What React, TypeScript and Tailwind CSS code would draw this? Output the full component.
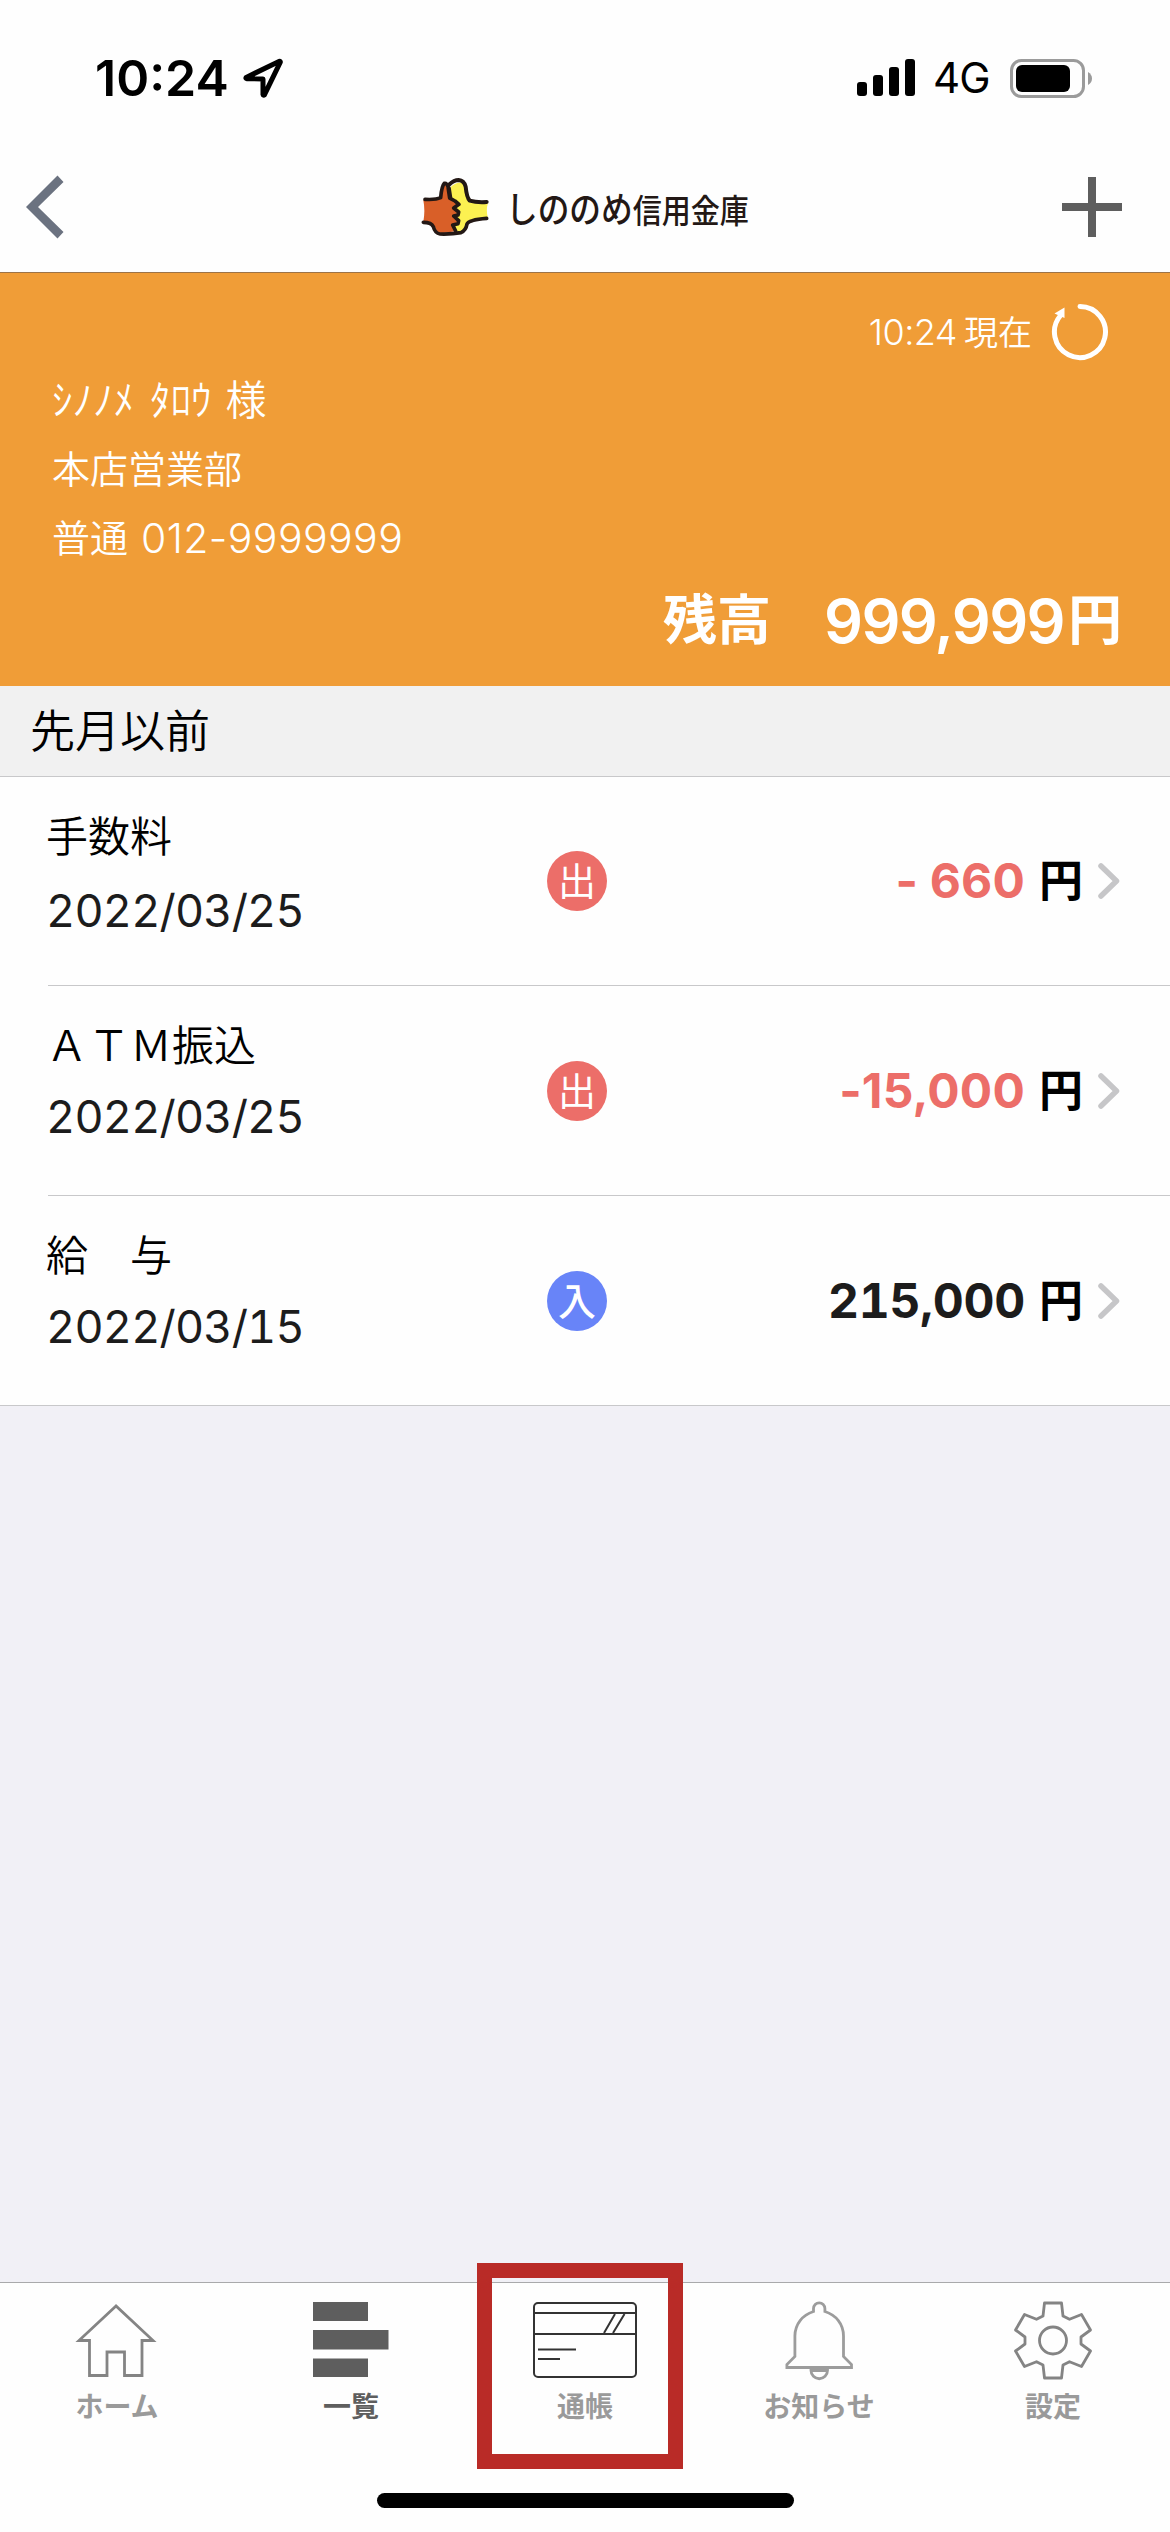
import { ReactNode } from "react";
import clsx from "clsx";

type Transaction = {
  title: string;
  date: string;
  kind: "出" | "入";
  amount: string;
};

const transactions: Transaction[] = [
  { title: "手数料", date: "2022/03/25", kind: "出", amount: "- 660" },
  { title: "ＡＴＭ振込", date: "2022/03/25", kind: "出", amount: "-15,000" },
  { title: "給　与", date: "2022/03/15", kind: "入", amount: "215,000" },
];

function StatusBar() {
  return (
    <div className="flex h-[156px] items-center pl-[95px] pr-[77px] text-black">
      <span className="w-[148px] text-[50px] font-semibold leading-none">
        10:24
      </span>
      <svg className="h-10 w-10" viewBox="0 0 40 40" fill="none">
        <path
          d="M36.5 3.2 3.2 19.4q-.8 1.2.6 1.3L20 21v15.4q.3 1.4 1.4.4L37.3 4.2q.2-1-.8-1Z"
          stroke="#000"
          strokeWidth="5"
          strokeLinejoin="round"
        />
      </svg>
      <svg className="ml-auto h-[38px] w-[58px]" viewBox="0 0 58 38">
        <rect x="0" y="23" width="10" height="14" rx="3" />
        <rect x="16" y="16" width="10" height="21" rx="3" />
        <rect x="32" y="8" width="10" height="29" rx="3" />
        <rect x="48" y="0" width="10" height="37" rx="3" />
      </svg>
      <span className="ml-[18px] w-[77px] text-[42px] leading-none tracking-[-1px]">
        4G
      </span>
      <svg className="h-[39px] w-[83px]" viewBox="0 0 83 39">
        <rect x="1.5" y="1.5" width="72" height="36" rx="10" fill="none" stroke="#9b9b9b" strokeWidth="3" />
        <rect x="6" y="6" width="54" height="27" rx="6" />
        <path d="M78 13q4 2.500 4 6.500t-4 6.500Z" fill="#9b9b9b" />
      </svg>
    </div>
  );
}

function LogoMark() {
  return (
    <svg className="h-[70px] w-20" viewBox="0 0 240 210" fill="none">
      <path
        d="M25 85Q60 86 78 80Q82 42 90 34Q98 50 106 80L128 98L114 108L130 124L114 130L130 150L112 158L122 178L80 184Q62 180 60 165Q50 155 25 150Q31 115 25 85Z"
        fill="#d95f28"
      />
      <path
        d="M106 46Q122 30 142 32Q156 60 165 92L219 92Q212 115 219 138Q165 140 158 150Q155 175 145 182L118 176L114 158L130 150L116 132L130 122L116 108L130 98L110 80Z"
        fill="#fcf151"
      />
      <g stroke="#231815" strokeLinecap="round" strokeLinejoin="round" strokeWidth="11">
        <path d="M30 82Q62 84 77 77Q80 42 88 34Q95 32 99 44L104 78" />
        <path d="M102 38Q117 24 131 24Q147 25 152 44Q155 76 164 86Q185 92 215 90" strokeWidth="12" />
        <path d="M25 151Q49 151 55 164Q60 184 75 186Q110 187 138 182Q153 175 156 156Q162 143 215 139" />
        <path d="M102 48L107 80L120 87L132 97L116 108L131 120L129 129L116 132L131 146L129 155L113 159L122 177" />
      </g>
    </svg>
  );
}

function NavBar() {
  return (
    <div className="flex h-[117px] items-center border-b border-[#9c7347] pb-[15px] pl-[26px] pr-12">
      <svg className="h-16 w-[38px]" viewBox="0 0 38 64">
        <path d="M31.500 0.500 0 32 31.500 63.500 37.500 57 12 32 37.500 7Z" fill="#6b7280" />
      </svg>
      <div className="ml-[351px] flex items-center">
        <LogoMark />
        <div className="ml-[11px] mt-[13px] w-[245px] origin-left scale-x-[0.88] whitespace-nowrap font-medium leading-10 text-[#231815]">
          <span className="text-[36px]">しののめ</span>
          <span className="text-[33px]">信用金庫</span>
        </div>
      </div>
      <svg className="ml-auto h-[60px] w-[60px]" viewBox="0 0 60 60">
        <path d="M26 0h8v60h-8zM0 26h60v8H0z" fill="#5e5e5e" />
      </svg>
    </div>
  );
}

function AccountPanel() {
  return (
    <section className="h-[413px] bg-[#f09d37] pl-[52px] pr-12 pt-[31px] text-white">
      <div className="flex h-14 items-center justify-end pr-[13px]">
        <span className="text-[36px] font-[350] tracking-[-0.5px]">10:24</span>
        <span className="ml-[7px] text-[34px] font-[350]">現在</span>
        <svg className="ml-[19px] h-[58px] w-[58px]" viewBox="0 0 58 58" fill="none">
          <path
            d="M29 3.500A25.500 25.500 0 1 1 9.500 12.500"
            stroke="#fff"
            strokeWidth="5"
            strokeLinecap="round"
          />
          <path d="M3.500 10.500 13.500 4.500v10.500Z" fill="#fff" />
        </svg>
      </div>

      <div className="mt-[6px] text-[38px] font-[350] leading-[69px]">
        <p className="flex text-[41px]">
          <span>ｼﾉﾉﾒ</span>
          <span className="ml-4">ﾀﾛｳ</span>
          <span className="ml-[14px]">様</span>
        </p>
        <p>本店営業部</p>
        <p className="flex">
          <span>普通</span>
          <span className="ml-[13px] text-[41px] tracking-[0.4px]">012-9999999</span>
        </p>
      </div>

      <p className="mt-[18px] flex justify-end text-[54px] font-semibold leading-[60px]">
        <span>残高</span>
        <span className="ml-[53px] text-[61px] tracking-[-1.6px]">999,999</span>
        <span className="ml-1">円</span>
      </p>
    </section>
  );
}

function TransactionRow({ item }: { item: Transaction }) {
  const isOut = item.kind === "出";

  return (
    <li className="group ml-12 flex h-[210px] items-center border-b border-[#c8c8ca] pr-[50px] first:h-[209px] last:ml-0 last:pl-12">
      <div className="-ml-0.5 h-full w-[501px] pt-[25px] font-[350]">
        <p className="text-[42px] leading-[70px] text-black">{item.title}</p>
        <p className="text-[45px] font-normal leading-[71px] tabular-nums tracking-[-0.8px] text-[#1c1c1c] group-first:mt-[3px]">
          {item.date}
        </p>
      </div>
      <span
        className={clsx(
          "flex h-[60px] w-[60px] items-center justify-center rounded-full text-[38px] leading-none text-white",
          isOut ? "bg-[#ec6e69]" : "bg-[#6884f8] font-medium"
        )}
      >
        {item.kind}
      </span>
      <p className="ml-auto flex items-center font-bold leading-none">
        <span
          className={clsx(
            "text-[48px]",
            isOut
              ? "tracking-[0.2px] text-[#ec6e69]"
              : "tabular-nums tracking-[-0.3px] text-[#1c1c1c]"
          )}
        >
          {item.amount}
        </span>
        <span className="ml-[14px] text-[44px] text-black">円</span>
      </p>
      <svg className="ml-[15px] h-9 w-[22px]" viewBox="0 0 22 36" fill="none">
        <path
          d="M3 3 18.500 18 3 33"
          stroke="#c6c6c8"
          strokeWidth="5.500"
          strokeLinecap="round"
          strokeLinejoin="round"
        />
      </svg>
    </li>
  );
}

function HomeIcon() {
  return (
    <svg className="h-[78px] w-[84px]" viewBox="0 0 84 78" fill="none">
      <path
        d="M41 4 4 38.500h10.500V73.500H32V50h17.500v23.500H67V38.500h11Z"
        stroke="#848484"
        strokeWidth="2.800"
      />
    </svg>
  );
}

function ListIcon() {
  return (
    <svg className="h-[78px] w-[76px]" viewBox="0 0 76 78">
      <path d="M0 0h55v19H0zM0 28h75.500v19.500H0zM0 56.500h55V75H0z" fill="#5e5e5e" />
    </svg>
  );
}

function PassbookIcon() {
  return (
    <svg className="h-[78px] w-[104px]" viewBox="0 0 104 78" fill="none" stroke="#333" strokeWidth="2">
      <rect x="1" y="1" width="102" height="74" rx="4" />
      <path d="M1 11h102M1 32h102M5 47.500h38M5 57h22" />
      <path d="M82 12 71 31M91.500 12 80 31" />
    </svg>
  );
}

function BellIcon() {
  return (
    <svg className="h-[80px] w-[68px]" viewBox="0 0 68 80" fill="none" stroke="#9c9c9c" strokeWidth="2.800">
      <path d="M28.500 10.500V7.500a5.700 5.700 0 0 1 11.400 0v3C51 14 58.500 23 58.500 35v20.500l8 8v3H1.900v-3l8-8V35C10 23 17.500 14 28.500 10.500Z" />
      <path d="M26 69.500h16.500a8.250 8.250 0 0 1-16.500 0Z" />
    </svg>
  );
}

function GearIcon() {
  return (
    <svg className="h-[80px] w-[80px]" viewBox="0 0 80 80" fill="none" stroke="#848484" strokeWidth="2.800" strokeLinejoin="round">
      <path d="M31.500 2h17l1.500 13 6.500 3.300L68.500 13.500 77.500 29 68 36v7l9.500 7L68.500 65.500 56.500 60.700 50 64l-1.500 13h-17L30 64 23.500 60.700 11.500 65.500 2.500 50 12 43v-7L2.500 29 11.500 13.500 23.500 18.300 30 15Z" />
      <circle cx="40" cy="39.500" r="13.500" />
    </svg>
  );
}

const tabs: { label: string; icon: ReactNode; active?: boolean; marked?: boolean }[] = [
  { label: "ホーム", icon: <HomeIcon /> },
  { label: "一覧", icon: <ListIcon />, active: true },
  { label: "通帳", icon: <PassbookIcon />, marked: true },
  { label: "お知らせ", icon: <BellIcon /> },
  { label: "設定", icon: <GearIcon /> },
];

function TabBar() {
  return (
    <footer className="flex h-[250px] flex-col border-t border-[#a9a9ab] bg-[#fefefe]">
      <nav className="flex flex-1">
        {tabs.map((tab) => (
          <div
            key={tab.label}
            className={clsx(
              "relative flex flex-1 flex-col items-center pt-[18px] text-[28px] font-bold",
              tab.active ? "text-[#5e5e5e]" : "text-[#9a9a9a]"
            )}
          >
            <div className="flex h-[80px] items-center">{tab.icon}</div>
            <span className="mt-[6px] leading-10">{tab.label}</span>
            {tab.marked && (
              <div className="absolute -top-5 left-[9px] h-[206px] w-[206px] border-[15px] border-[#b92b27]" />
            )}
          </div>
        ))}
      </nav>
      <div className="mx-auto mb-6 h-[15px] w-[417px] rounded-full bg-black" />
    </footer>
  );
}

export default function App() {
  return (
    <div className="flex h-[2532px] w-[1170px] flex-col bg-[#f1f0f6] font-[Inter,'Noto_Sans_CJK_JP',sans-serif]">
      <header className="bg-[#fefefe]">
        <StatusBar />
        <NavBar />
      </header>
      <AccountPanel />
      <main className="flex-1">
        <h2 className="h-[91px] border-b border-[#c8c8ca] bg-[#f1f1f1] pl-[30px] text-[45px] font-[350] leading-[92px] text-black">
          先月以前
        </h2>
        <ul className="bg-[#fefefe]">
          {transactions.map((item) => (
            <TransactionRow key={item.title} item={item} />
          ))}
        </ul>
      </main>
      <TabBar />
    </div>
  );
}
